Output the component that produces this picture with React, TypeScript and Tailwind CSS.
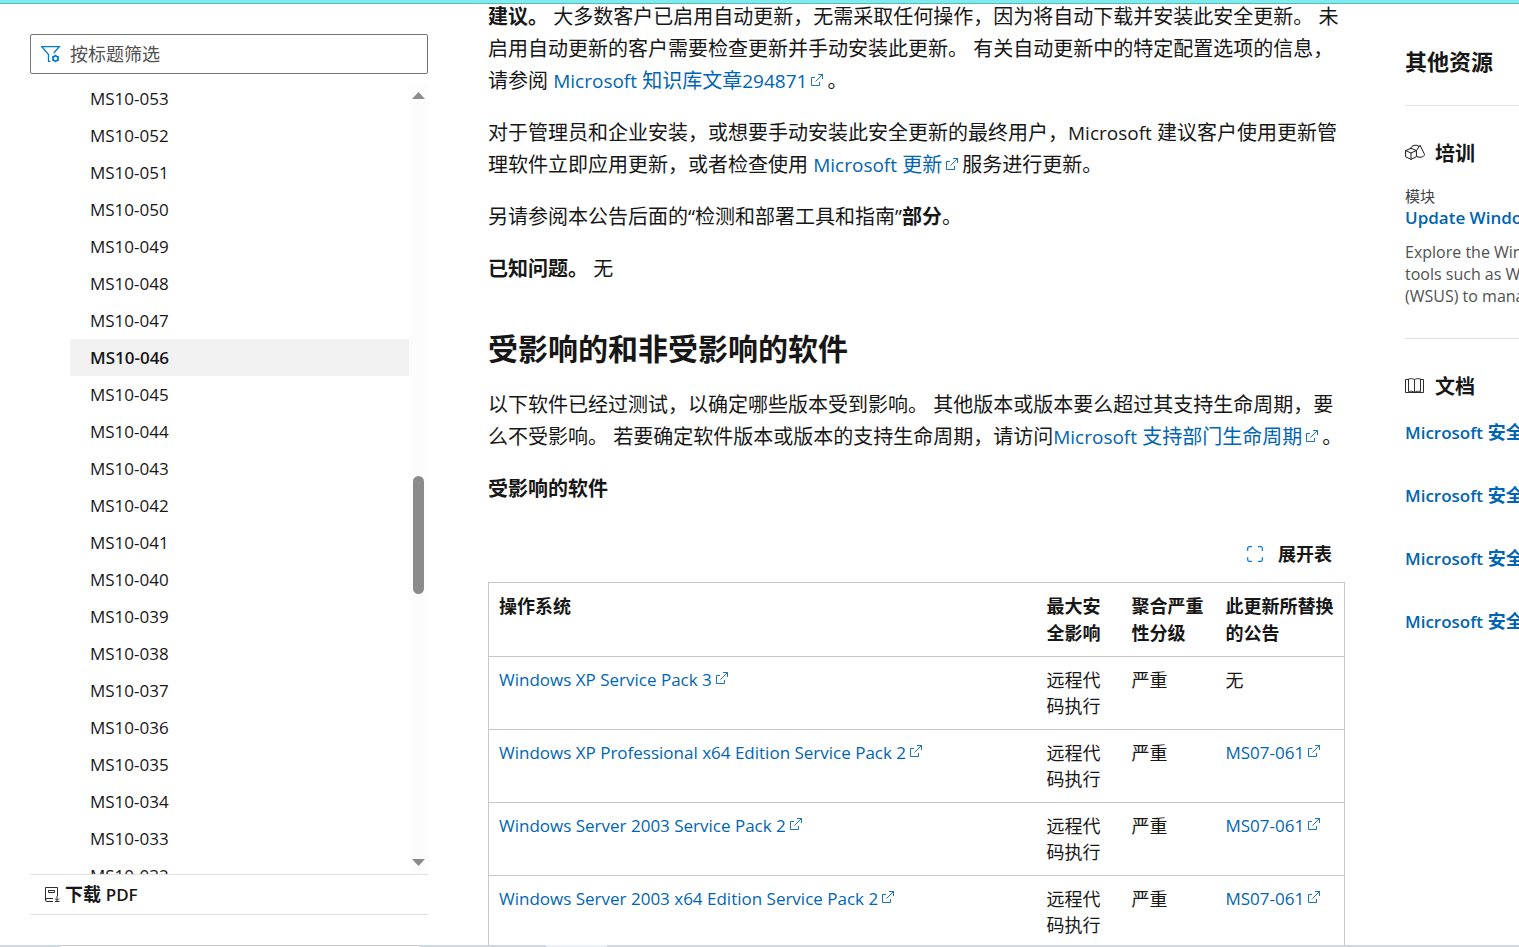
import React from 'react';

const bulletins = [
  'MS10-053', 'MS10-052', 'MS10-051', 'MS10-050', 'MS10-049', 'MS10-048',
  'MS10-047', 'MS10-046', 'MS10-045', 'MS10-044', 'MS10-043', 'MS10-042',
  'MS10-041', 'MS10-040', 'MS10-039', 'MS10-038', 'MS10-037', 'MS10-036',
  'MS10-035', 'MS10-034', 'MS10-033', 'MS10-032',
];

const rows = [
  { os: 'Windows XP Service Pack 3', replaces: null },
  { os: 'Windows XP Professional x64 Edition Service Pack 2', replaces: 'MS07-061' },
  { os: 'Windows Server 2003 Service Pack 2', replaces: 'MS07-061' },
  { os: 'Windows Server 2003 x64 Edition Service Pack 2', replaces: 'MS07-061' },
];

const docLinks = ['安全公告', '安全公告', '安全公告', '安全公告'];

function ExternalIcon() {
  return (
    <svg className="mx-1 inline-block h-3 w-3 align-[2px]" viewBox="0 0 12 12" fill="none" stroke="currentColor" strokeWidth="0.900" aria-hidden="true">
      <path d="M4 3.500H.5v8h8V8M7 .5h4.500V5M11.500.5L4.500 7.500" />
    </svg>
  );
}

function ExternalLink({ children }: { children: React.ReactNode }) {
  return (
    <a href="#" className="text-[#0065b3]">
      {children}
      <ExternalIcon />
    </a>
  );
}

function Latin({ children }: { children: React.ReactNode }) {
  return <span className="text-[19px]">{children}</span>;
}

function Sidebar() {
  return (
    <aside className="flex w-[398px] shrink-0 flex-col pt-[34px] pb-8">
      <div className="flex h-10 shrink-0 items-center rounded-xs border border-[#757575] px-[10px]">
        <svg className="h-5 w-5 shrink-0 text-[#0078d4]" viewBox="0 0 20 20" fill="none" stroke="currentColor" strokeWidth="1.300" aria-hidden="true">
          <path d="M9.500 17.400H7.500V10.500L.8 2.700H18.300L12.800 9" />
          <circle cx="14.500" cy="14.500" r="2.500" strokeWidth="1.600" />
          <path strokeWidth="1.600" d="M14.500 10.700v1.300M14.500 17v1.300M11.200 12.600l1.100.6M16.700 15.800l1.100.6M11.200 16.400l1.100-.6M16.700 13.200l1.100-.6" />
        </svg>
        <input
          type="text"
          aria-label="按标题筛选"
          placeholder="按标题筛选"
          className="ml-[9px] min-w-0 flex-1 bg-transparent text-lg outline-none placeholder:text-[#505050]"
        />
      </div>

      <div className="mt-[6px] flex min-h-0 flex-1">
        <ul className="min-w-0 flex-1 overflow-hidden pl-10">
          {bulletins.map((id) => (
            <li key={id}>
              <a
                href="#"
                className={
                  id === 'MS10-046'
                    ? 'block h-[37px] bg-[#f2f2f2] pl-5 text-[17px] leading-[37px] font-semibold'
                    : 'block h-[37px] pl-5 text-[17px] leading-[37px]'
                }
              >
                {id}
              </a>
            </li>
          ))}
        </ul>
        <div className="mt-1 flex w-[19px] flex-col items-center bg-[#fcfcfc] pt-2 pb-2 text-[#8b8b8b]">
          <svg className="h-[7px] w-[13px]" viewBox="0 0 13 7" fill="currentColor" aria-hidden="true">
            <path d="M0 7L6.500 0L13 7z" />
          </svg>
          <div className="flex-[377]" />
          <div className="h-[118px] w-[11px] rounded-full bg-[#8b8b8b]" />
          <div className="flex-[265]" />
          <svg className="h-[7px] w-[13px]" viewBox="0 0 13 7" fill="currentColor" aria-hidden="true">
            <path d="M0 0L6.500 7L13 0z" />
          </svg>
        </div>
      </div>

      <div className="flex h-[41px] shrink-0 items-center border-y border-[#e3e3e3] pl-[14px]">
        <button type="button" className="flex items-center gap-[5px] text-lg font-semibold">
          <svg className="h-4 w-4" viewBox="0 0 16 16" fill="none" stroke="currentColor" strokeWidth="0.900" aria-hidden="true">
            <path d="M9 14.500H3a1.500 1.500 0 0 1-1.500-1.500V.5h12V9M1.500 13A1.500 1.500 0 0 1 3 11.500h6M4.500 3.500h6v2h-6zM13 9v4.500M11 11.500l2 2 2-2M11 14.500h4.500" />
          </svg>
          <span>
            下载 <span className="text-[17px]">PDF</span>
          </span>
        </button>
      </div>
    </aside>
  );
}

function SoftwareTable() {
  return (
    <table className="w-full table-fixed border-collapse border border-[#c8c8c8] text-lg">
      <colgroup>
        <col />
        <col className="w-[85px]" />
        <col className="w-[94px]" />
        <col className="w-[129px]" />
      </colgroup>
      <thead>
        <tr className="text-left align-top leading-[27px]">
          <th className="px-[10px] pt-[10px] pb-[9px]">操作系统</th>
          <th className="px-[10px] pt-[10px] pb-[9px]">最大安全影响</th>
          <th className="px-[10px] pt-[10px] pb-[9px]">聚合严重性分级</th>
          <th className="px-[10px] pt-[10px] pb-[9px]">此更新所替换的公告</th>
        </tr>
      </thead>
      <tbody>
        {rows.map((row) => (
          <tr key={row.os} className="border-t border-[#c8c8c8] align-top leading-[26px]">
            <td className="p-[10px] text-[17px]">
              <ExternalLink>{row.os}</ExternalLink>
            </td>
            <td className="p-[10px]">远程代码执行</td>
            <td className="p-[10px]">严重</td>
            {row.replaces ? (
              <td className="p-[10px] text-[17px]">
                <ExternalLink>{row.replaces}</ExternalLink>
              </td>
            ) : (
              <td className="p-[10px]">无</td>
            )}
          </tr>
        ))}
      </tbody>
    </table>
  );
}

function Article() {
  return (
    <main className="ml-[60px] min-w-0 flex-1 overflow-hidden pt-px text-xl leading-8">
      <div className="flex flex-col gap-5">
        <p>
          <strong>建议。</strong> 大多数客户已启用自动更新，无需采取任何操作，因为将自动下载并安装此安全更新。 未启用自动更新的客户需要检查更新并手动安装此更新。 有关自动更新中的特定配置选项的信息，请参阅{' '}
          <ExternalLink>
            <Latin>Microsoft</Latin> 知识库文章<Latin>294871</Latin>
          </ExternalLink>
          。
        </p>
        <p>
          对于管理员和企业安装，或想要手动安装此安全更新的最终用户，<Latin>Microsoft</Latin> 建议客户使用更新管理软件立即应用更新，或者检查使用{' '}
          <ExternalLink>
            <Latin>Microsoft</Latin> 更新
          </ExternalLink>
          服务进行更新。
        </p>
        <p>
          另请参阅本公告后面的“检测和部署工具和指南”<strong>部分</strong>。
        </p>
        <p>
          <strong>已知问题。</strong> 无
        </p>
      </div>

      <h2 className="mt-11 mb-5 text-3xl leading-10 font-bold">受影响的和非受影响的软件</h2>

      <div className="flex flex-col gap-5">
        <p>
          以下软件已经过测试，以确定哪些版本受到影响。 其他版本或版本要么超过其支持生命周期，要么不受影响。 若要确定软件版本或版本的支持生命周期，请访问
          <ExternalLink>
            <Latin>Microsoft</Latin> 支持部门生命周期
          </ExternalLink>
          。
        </p>
        <p>
          <strong>受影响的软件</strong>
        </p>
      </div>

      <div className="mt-[31px] flex justify-end pr-[13px]">
        <button type="button" className="flex h-[36px] items-center gap-[15px] text-lg font-bold">
          <svg className="h-4 w-4 text-[#0078d4]" viewBox="0 0 16 16" fill="none" stroke="currentColor" strokeWidth="1.200" strokeLinecap="round" aria-hidden="true">
            <path d="M.7 4.500V2.200A1.500 1.500 0 0 1 2.200.7h2.300M11.500.7h2.300a1.500 1.500 0 0 1 1.500 1.500v2.300M15.300 11.500v2.300a1.500 1.500 0 0 1-1.500 1.500h-2.300M4.500 15.300H2.200a1.500 1.500 0 0 1-1.500-1.500v-2.300" />
          </svg>
          展开表
        </button>
      </div>
      <div className="mt-[10px]">
        <SoftwareTable />
      </div>
    </main>
  );
}

function Resources() {
  return (
    <aside className="ml-[60px] w-[114px] shrink-0 overflow-hidden pt-[45px] whitespace-nowrap">
      <h2 className="text-[22px] leading-8 font-bold">其他资源</h2>
      <hr className="mt-7 border-[#e3e3e3]" />

      <h3 className="mt-8 flex items-center gap-[10px] text-xl leading-8 font-bold">
        <svg className="h-5 w-5" viewBox="0 0 20 20" fill="none" stroke="currentColor" strokeLinejoin="round" aria-hidden="true">
          <path d="M.6 6.500L6 4.300l5.400 2.200v6.200L6 15.400.6 12.700zM.6 6.500L6 9l5.400-2.500M6 9v6.400M5.500 4.300A5.500 5.500 0 0 1 14 2.500M11.700 6.200l3.300-5 4.300 8.700c.6 1.800-1.300 3.300-4.300 3.300-1.500 0-2.600-.2-3.500-.8" />
        </svg>
        培训
      </h3>
      <p className="mt-[15px] text-[15px] leading-[22px] text-[#404040]">模块</p>
      <a href="#" className="block text-[17px] leading-[22px] font-semibold text-[#0065b3]">Update Windows</a>
      <p className="mt-3 text-base leading-[22px] text-[#505050]">
        Explore the Windows
        <br />
        tools such as Windows
        <br />
        (WSUS) to manage
      </p>
      <hr className="mt-[31px] border-[#e3e3e3]" />

      <h3 className="mt-8 flex items-center gap-[10px] text-xl leading-8 font-bold">
        <svg className="h-5 w-5" viewBox="0 0 20 20" fill="none" stroke="currentColor" strokeWidth="0.900" aria-hidden="true">
          <path d="M9.500 2.500v13M9.500 2.500C8 1.500 5 1.500 3.500 2v12.500c2-.5 4.500-.5 6 1 1.500-1.500 4-1.500 6-1V2C14 1.500 11 1.500 9.500 2.500M3.500 2.500h-3v13h18v-13h-3" />
        </svg>
        文档
      </h3>
      <ul className="mt-4 flex flex-col gap-9 text-lg leading-[27px] font-bold text-[#0065b3]">
        {docLinks.map((label, i) => (
          <li key={i}>
            <a href="#">
              <span className="text-[17px] font-semibold">Microsoft</span> {label}
            </a>
          </li>
        ))}
      </ul>
    </aside>
  );
}

export default function App() {
  return (
    <div
      lang="zh-CN"
      className="relative flex h-screen overflow-hidden bg-white pl-[30px] font-['Open_Sans','Noto_Sans_CJK_SC',sans-serif] text-[#171717]"
    >
      <Sidebar />
      <Article />
      <Resources />
      <div className="absolute inset-x-0 top-0 h-1 border-b border-[#5cb8b8] bg-[#7eebee]" />
      <div className="absolute inset-x-0 bottom-0 flex h-[2px] bg-[#d0d7e0]">
        <div className="ml-[61px] w-[358px] border-t border-[#c8c8c8] bg-white" />
        <div className="ml-[127px] w-[61px] bg-[#edf0f5]" />
      </div>
    </div>
  );
}
